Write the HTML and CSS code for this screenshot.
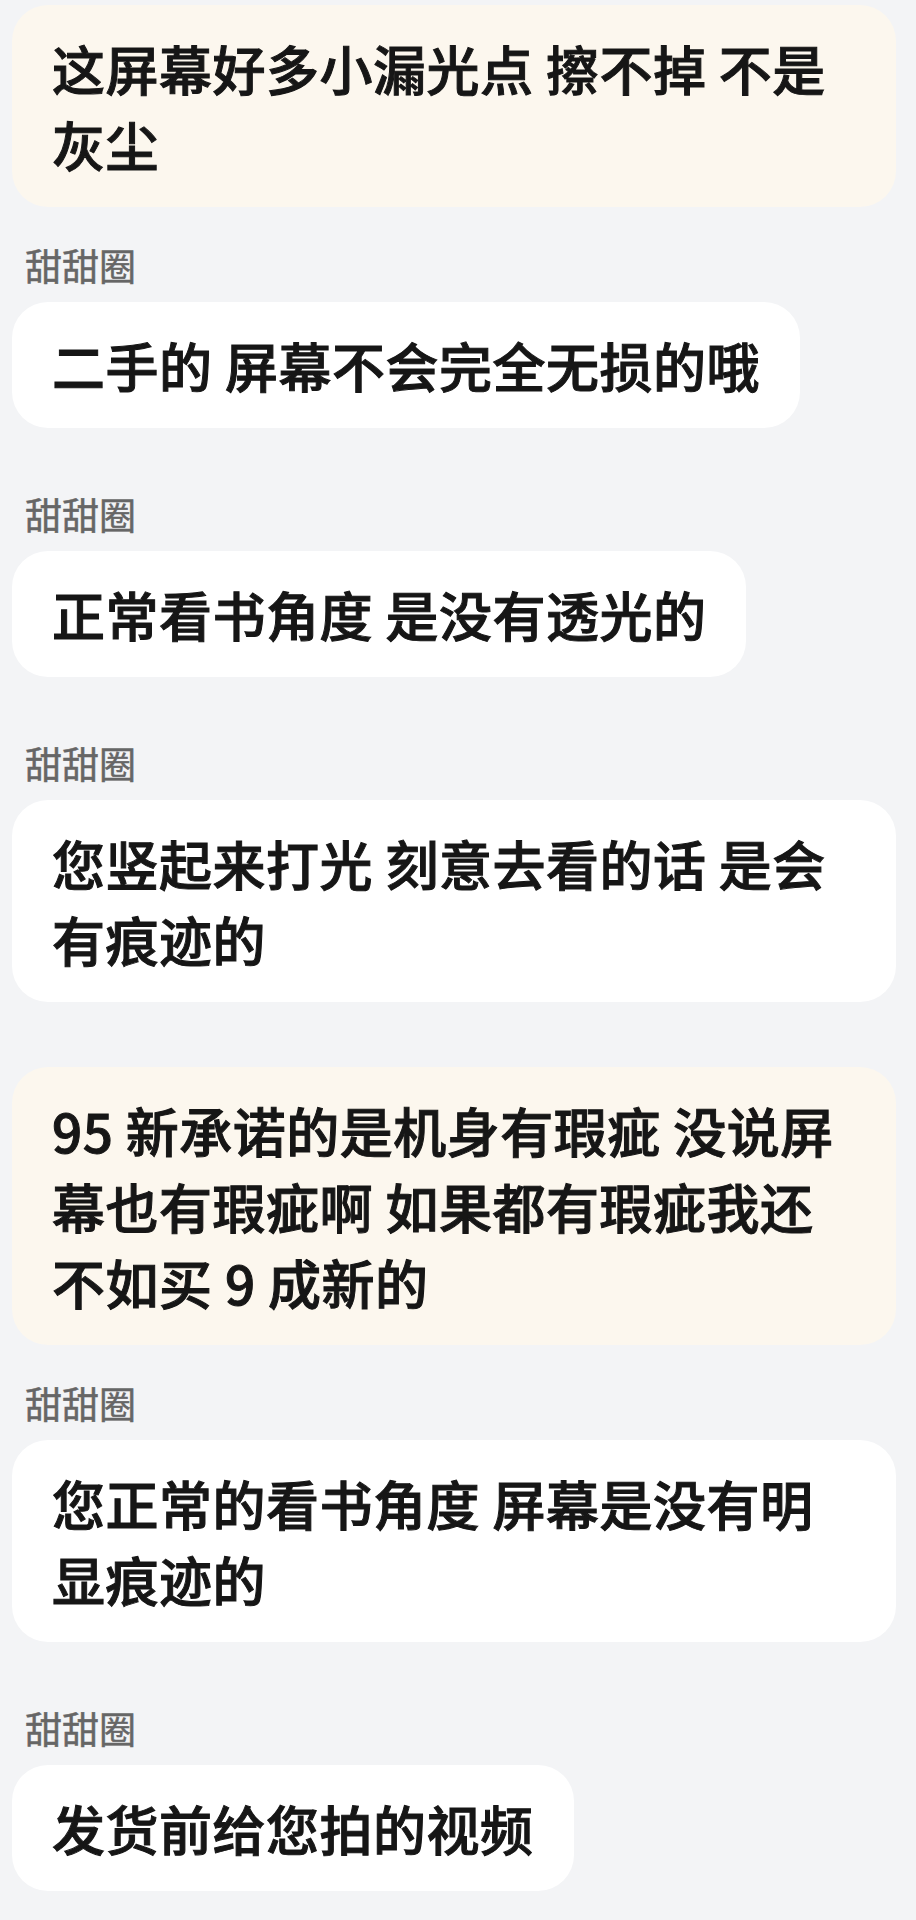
FILE: index.html
```html
<!DOCTYPE html>
<html lang="zh-CN">
<head>
<meta charset="utf-8">
<title>聊天记录</title>
<link rel="stylesheet" href="styles.css">
</head>
<body>
<main class="chat">
  <div class="msg user">
    <div class="bubble">这屏幕好多小漏光点 擦不掉 不是灰尘</div>
  </div>
  <div class="msg agent">
    <div class="name">甜甜圈</div>
    <div class="bubble">二手的 屏幕不会完全无损的哦</div>
  </div>
  <div class="msg agent">
    <div class="name">甜甜圈</div>
    <div class="bubble">正常看书角度 是没有透光的</div>
  </div>
  <div class="msg agent">
    <div class="name">甜甜圈</div>
    <div class="bubble">您竖起来打光 刻意去看的话 是会有痕迹的</div>
  </div>
  <div class="msg user">
    <div class="bubble">95 新承诺的是机身有瑕疵 没说屏幕也有瑕疵啊 如果都有瑕疵我还不如买 9 成新的</div>
  </div>
  <div class="msg agent">
    <div class="name">甜甜圈</div>
    <div class="bubble">您正常的看书角度 屏幕是没有明显痕迹的</div>
  </div>
  <div class="msg agent">
    <div class="name">甜甜圈</div>
    <div class="bubble">发货前给您拍的视频</div>
  </div>
</main>
</body>
</html>
```
FILE: styles.css
```css
html, body {
  margin: 0;
  padding: 0;
  background: #f3f4f6;
}

body {
  font-family: "Noto Sans CJK SC", "Noto Sans", sans-serif;
  color: #161616;
}

.chat {
  display: flex;
  flex-direction: column;
  align-items: flex-start;
  padding: 5px 0 0 12px;
  width: 884px;
}

.msg {
  display: flex;
  flex-direction: column;
  align-items: flex-start;
  max-width: 884px;
}

.msg.user {
  margin-bottom: 36px;
}

.msg.agent {
  margin-bottom: 64px;
}

.msg.agent + .msg.user {
  margin-top: 1px;
}

.name {
  font-size: 37px;
  line-height: 44px;
  color: #666666;
  margin: 0 0 15px 13px;
  -webkit-text-stroke: 0.5px #666666;
}

.bubble {
  box-sizing: border-box;
  max-width: 884px;
  padding: 25px 40px;
  border-radius: 36px;
  font-size: 53px;
  letter-spacing: 0.5px;
  line-height: 76px;
  font-weight: 500;
  background: #ffffff;
  -webkit-text-stroke: 1px #161616;
}

.user .bubble {
  background: #fcf7ee;
}
```
